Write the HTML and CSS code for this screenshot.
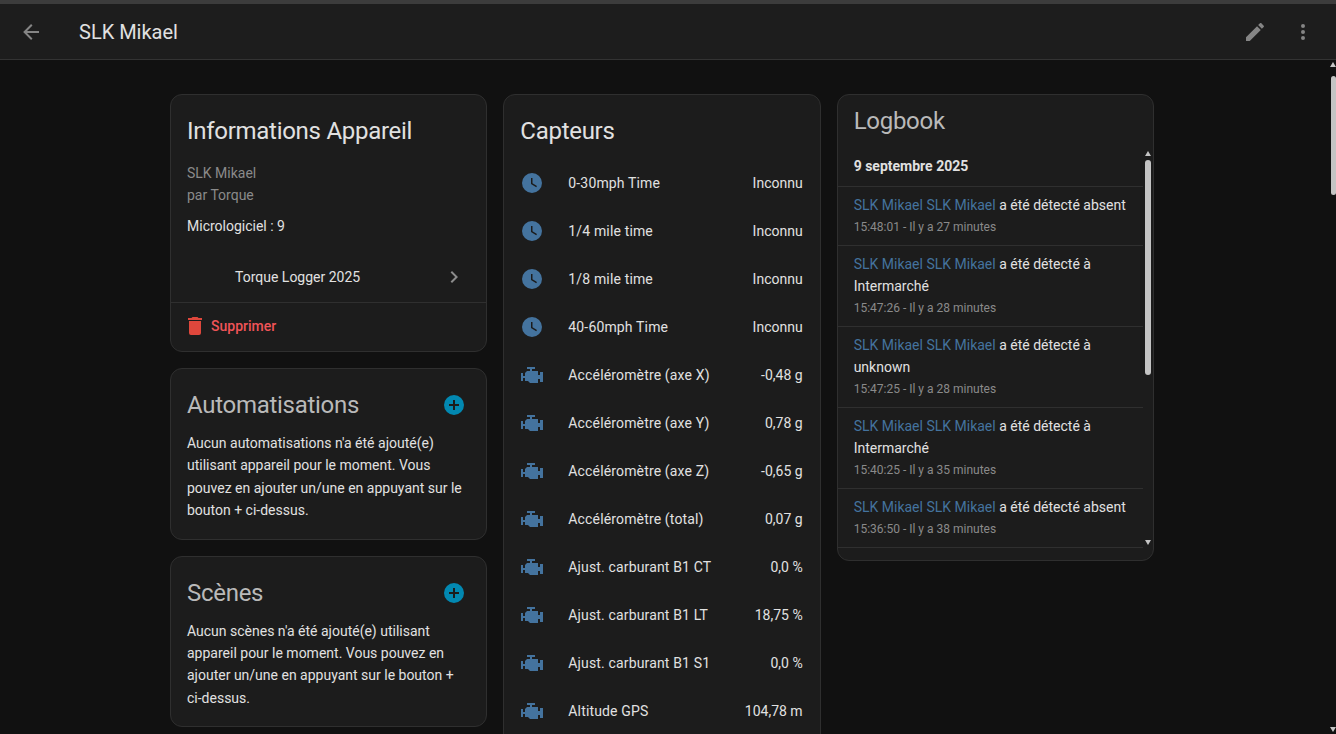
FILE: index.html
```html
<!DOCTYPE html>
<html>
<head>
  <title>SLK Mikael</title>
  <link rel="stylesheet" href="styles.css">
</head>
<body>
  <svg class="sprite" width="0" height="0">
    <symbol id="i-back" viewBox="0 0 24 24"><path d="M20,11V13H8L13.5,18.5L12.08,19.92L4.16,12L12.08,4.08L13.5,5.5L8,11H20Z"/></symbol>
    <symbol id="i-pencil" viewBox="0 0 24 24"><path d="M20.71,7.04C21.1,6.65 21.1,6 20.71,5.63L18.37,3.29C18,2.9 17.35,2.9 16.96,3.29L15.12,5.12L18.87,8.87M3,17.25V21H6.75L17.81,9.93L14.06,6.18L3,17.25Z"/></symbol>
    <symbol id="i-dots" viewBox="0 0 24 24"><path d="M12,16A2,2 0 0,1 14,18A2,2 0 0,1 12,20A2,2 0 0,1 10,18A2,2 0 0,1 12,16M12,10A2,2 0 0,1 14,12A2,2 0 0,1 12,14A2,2 0 0,1 10,12A2,2 0 0,1 12,10M12,4A2,2 0 0,1 14,6A2,2 0 0,1 12,8A2,2 0 0,1 10,6A2,2 0 0,1 12,4Z"/></symbol>
    <symbol id="i-chevron" viewBox="0 0 24 24"><path d="M8.59,16.58L13.17,12L8.59,7.41L10,6L16,12L10,18L8.59,16.58Z"/></symbol>
    <symbol id="i-delete" viewBox="0 0 24 24"><path d="M19,4H15.5L14.5,3H9.5L8.5,4H5V6H19M6,19A2,2 0 0,0 8,21H16A2,2 0 0,0 18,19V7H6V19Z"/></symbol>
    <symbol id="i-plus" viewBox="0 0 24 24"><path d="M17,13H13V17H11V13H7V11H11V7H13V11H17M12,2A10,10 0 0,0 2,12A10,10 0 0,0 12,22A10,10 0 0,0 22,12A10,10 0 0,0 12,2Z"/></symbol>
    <symbol id="i-clock" viewBox="0 0 24 24"><path d="M12,2A10,10 0 0,0 2,12A10,10 0 0,0 12,22A10,10 0 0,0 22,12A10,10 0 0,0 12,2M16.2,16.2L11,13V7H12.5V12.2L17,14.9L16.2,16.2Z"/></symbol>
    <symbol id="i-engine" viewBox="0 0 24 24"><path d="M7,4V6H10V8H7L5,10V13H3V10H1V18H3V15H5V18H8L10,20H18V16H20V19H23V9H20V12H18V8H12V6H15V4H7Z"/></symbol>
  </svg>

  <header class="topbar">
    <svg class="icon back"><use href="#i-back"/></svg>
    <div class="page-title">SLK Mikael</div>
    <svg class="icon edit"><use href="#i-pencil"/></svg>
    <svg class="icon more"><use href="#i-dots"/></svg>
  </header>

  <main class="content">
    <div class="column">
      <section class="card info">
        <h2>Informations Appareil</h2>
        <div class="muted">SLK Mikael</div>
        <div class="muted">par Torque</div>
        <div class="firmware">Micrologiciel : 9</div>
        <div class="link-row">
          <span>Torque Logger 2025</span>
          <svg class="icon chevron"><use href="#i-chevron"/></svg>
        </div>
        <div class="actions">
          <svg class="icon trash"><use href="#i-delete"/></svg>
          <span>Supprimer</span>
        </div>
      </section>

      <section class="card related">
        <div class="related-head">
          <h2>Automatisations</h2>
          <svg class="icon add"><use href="#i-plus"/></svg>
        </div>
        <p>Aucun automatisations n'a été ajouté(e) utilisant appareil pour le moment. Vous pouvez en ajouter un/une en appuyant sur le bouton + ci-dessus.</p>
      </section>

      <section class="card related">
        <div class="related-head">
          <h2>Scènes</h2>
          <svg class="icon add"><use href="#i-plus"/></svg>
        </div>
        <p>Aucun scènes n'a été ajouté(e) utilisant appareil pour le moment. Vous pouvez en ajouter un/une en appuyant sur le bouton + ci-dessus.</p>
      </section>
    </div>

    <div class="column">
      <section class="card sensors">
        <h2>Capteurs</h2>
        <div class="sensor"><svg class="icon state"><use href="#i-clock"/></svg><span class="name">0-30mph Time</span><span>Inconnu</span></div>
        <div class="sensor"><svg class="icon state"><use href="#i-clock"/></svg><span class="name">1/4 mile time</span><span>Inconnu</span></div>
        <div class="sensor"><svg class="icon state"><use href="#i-clock"/></svg><span class="name">1/8 mile time</span><span>Inconnu</span></div>
        <div class="sensor"><svg class="icon state"><use href="#i-clock"/></svg><span class="name">40-60mph Time</span><span>Inconnu</span></div>
        <div class="sensor"><svg class="icon state"><use href="#i-engine"/></svg><span class="name">Accéléromètre (axe X)</span><span>-0,48 g</span></div>
        <div class="sensor"><svg class="icon state"><use href="#i-engine"/></svg><span class="name">Accéléromètre (axe Y)</span><span>0,78 g</span></div>
        <div class="sensor"><svg class="icon state"><use href="#i-engine"/></svg><span class="name">Accéléromètre (axe Z)</span><span>-0,65 g</span></div>
        <div class="sensor"><svg class="icon state"><use href="#i-engine"/></svg><span class="name">Accéléromètre (total)</span><span>0,07 g</span></div>
        <div class="sensor"><svg class="icon state"><use href="#i-engine"/></svg><span class="name">Ajust. carburant B1 CT</span><span>0,0 %</span></div>
        <div class="sensor"><svg class="icon state"><use href="#i-engine"/></svg><span class="name">Ajust. carburant B1 LT</span><span>18,75 %</span></div>
        <div class="sensor"><svg class="icon state"><use href="#i-engine"/></svg><span class="name">Ajust. carburant B1 S1</span><span>0,0 %</span></div>
        <div class="sensor"><svg class="icon state"><use href="#i-engine"/></svg><span class="name">Altitude GPS</span><span>104,78 m</span></div>
      </section>
    </div>

    <div class="column">
      <section class="card logbook">
        <h2>Logbook</h2>
        <div class="log-list">
          <div class="log-date">9 septembre 2025</div>
          <div class="log-entry">
            <div><span class="log-link">SLK Mikael SLK Mikael</span> a été détecté absent</div>
            <div class="log-time">15:48:01 - Il y a 27 minutes</div>
          </div>
          <div class="log-entry">
            <div><span class="log-link">SLK Mikael SLK Mikael</span> a été détecté à<br>Intermarché</div>
            <div class="log-time">15:47:26 - Il y a 28 minutes</div>
          </div>
          <div class="log-entry">
            <div><span class="log-link">SLK Mikael SLK Mikael</span> a été détecté à<br>unknown</div>
            <div class="log-time">15:47:25 - Il y a 28 minutes</div>
          </div>
          <div class="log-entry">
            <div><span class="log-link">SLK Mikael SLK Mikael</span> a été détecté à<br>Intermarché</div>
            <div class="log-time">15:40:25 - Il y a 35 minutes</div>
          </div>
          <div class="log-entry">
            <div><span class="log-link">SLK Mikael SLK Mikael</span> a été détecté absent</div>
            <div class="log-time">15:36:50 - Il y a 38 minutes</div>
          </div>
        </div>
        <div class="bar-up log-up"></div>
        <div class="bar-thumb log-thumb"></div>
        <div class="bar-down log-down"></div>
      </section>
    </div>
  </main>

  <div class="bar-up page-up"></div>
  <div class="bar-thumb page-thumb"></div>
  <div class="bar-down page-down"></div>
</body>
</html>
```

FILE: styles.css
```css
html, body {
  height: 100%;
}

body {
  margin: 0;
  overflow: hidden;
  background-color: #111;
  color: #e1e1e1;
  font-family: Roboto, "Liberation Sans", sans-serif;
  font-size: 14px;
  line-height: 22px;
  position: relative;
}

.sprite {
  position: absolute;
}

.icon {
  width: 24px;
  height: 24px;
  flex: none;
  fill: #9b9b9b;
}

/* top bar */
.topbar {
  height: 55px;
  display: flex;
  align-items: center;
  padding: 0 21px 0 19px;
  background-color: #1d1d1d;
  border-top: 4px solid #3c3c3c;
  border-bottom: 1px solid #333;
}

.topbar .icon {
  fill: #858585;
}

.page-title {
  margin-left: 36px;
  flex: 1;
  font-size: 20px;
  color: #e1e1e1;
}

.more {
  margin-left: 24px;
}

/* columns */
.content {
  display: flex;
  gap: 16px;
  align-items: flex-start;
  padding: 34px 0 0 170px;
}

.column {
  width: 317.33px;
  display: flex;
  flex-direction: column;
  gap: 16px;
}

.card {
  background-color: #1c1c1c;
  border: 1px solid #2f2f2f;
  border-radius: 12px;
  box-sizing: border-box;
  position: relative;
}

h2 {
  margin: 0;
  font-size: 24px;
  font-weight: 400;
  line-height: 32px;
  letter-spacing: -0.28px;
  color: #e1e1e1;
}

/* device info */
.info {
  height: 258px;
  padding: 20px 0 0;
}

.info h2,
.info .muted,
.info .firmware {
  padding: 0 16px;
}

.info h2 {
  margin-bottom: 15px;
}

.muted {
  color: #8a8a8a;
}

.firmware {
  margin-top: 9px;
  color: #e1e1e1;
}

.link-row {
  height: 48px;
  margin-top: 16px;
  display: flex;
  align-items: center;
  justify-content: space-between;
  padding: 0 20px 0 64px;
}

.chevron {
  fill: #8c8c8c;
}

.actions {
  margin-top: 1px;
  height: 46px;
  display: flex;
  align-items: center;
  gap: 4px;
  padding: 0 0 0 12px;
  border-top: 1px solid #2f2f2f;
  color: #f05458;
  font-weight: 500;
}

.trash {
  fill: #df473c;
}

/* automations, scenes */
.related {
  padding: 20px 16px 17px;
}

.related h2 {
  color: #b9b9b9;
}

.related-head {
  display: flex;
  align-items: center;
  justify-content: space-between;
  padding-right: 4px;
  margin-bottom: 11px;
}

.add {
  fill: #0288b1;
}

.related p {
  margin: 0;
  line-height: 22.4px;
  color: #e1e1e1;
}

/* sensors */
.sensors {
  padding: 20px 17px 20px 16px;
}

.sensors h2 {
  margin-bottom: 12px;
}

.sensor {
  height: 48px;
  display: flex;
  align-items: center;
  justify-content: space-between;
}

.sensor .state {
  fill: #44739e;
}

.sensor .name {
  flex: 1;
  margin-left: 24px;
  letter-spacing: 0.15px;
}

/* logbook */
.logbook {
  height: 467px;
  padding: 10px 0 0 16px;
}

.logbook h2 {
  color: #b9b9b9;
}

.log-list {
  margin-top: 12px;
  margin-left: -16px;
  padding-left: 16px;
  margin-right: 10px;
  height: 399px;
  overflow: hidden;
}

.log-date {
  height: 38px;
  font-weight: 700;
  color: #e1e1e1;
  border-bottom: 1px solid #2f2f2f;
  margin-left: -16px;
  padding-left: 16px;
  padding-top: 6px;
  box-sizing: border-box;
}

.log-entry {
  padding: 7px 0;
  margin-left: -16px;
  padding-left: 16px;
  border-bottom: 1px solid #2f2f2f;
}

.log-link {
  color: #44739e;
}

.log-time {
  font-size: 12px;
  color: #8a8a8a;
}

/* drawn scrollbars */
.bar-thumb {
  position: absolute;
  background-color: #c4c4c4;
  border-radius: 3px;
}

.bar-up,
.bar-down {
  position: absolute;
  width: 0;
  height: 0;
  border-left: 3px solid transparent;
  border-right: 3px solid transparent;
}

.bar-up {
  border-bottom: 5px solid #c4c4c4;
}

.bar-down {
  border-top: 5px solid #c4c4c4;
}

.page-up {
  top: 62px;
  right: 0;
}

.page-thumb {
  top: 76px;
  right: 0;
  width: 5px;
  height: 119px;
}

.page-down {
  top: 727px;
  right: 0;
}

.log-up {
  top: 56px;
  left: 307px;
}

.log-thumb {
  top: 65px;
  left: 307px;
  width: 6px;
  height: 215px;
}

.log-down {
  top: 445px;
  left: 307px;
}
```
